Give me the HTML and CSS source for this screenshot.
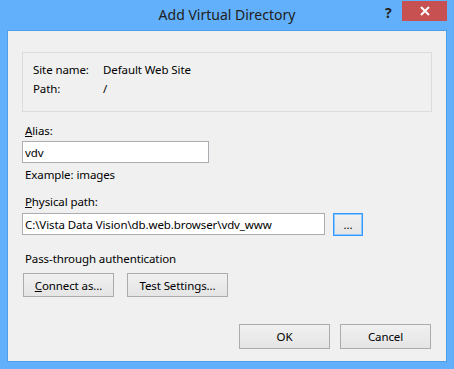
FILE: index.html
```html
<!DOCTYPE html>
<html lang="en">
<head>
    <meta charset="UTF-8">
    <title>Add Virtual Directory</title>
    <link rel="stylesheet" href="styles.css">
</head>
<body>
    <div class="window">
        <div class="titlebar">
            <span class="title">Add Virtual Directory</span>
            <span class="help">?</span>
            <span class="close">
                <svg width="10" height="10" viewBox="0 0 10 10">
                    <path d="M1 1 L9 9 M9 1 L1 9" stroke="#fff" stroke-width="2"/>
                </svg>
            </span>
        </div>
        <div class="client">
            <div class="group">
                <div class="info-row"><span class="info-label">Site name:</span><span>Default Web Site</span></div>
                <div class="info-row"><span class="info-label">Path:</span><span>/</span></div>
            </div>

            <label class="label alias-label"><u>A</u>lias:</label>
            <input class="textbox alias-box" type="text" value="vdv">
            <div class="label example">Example: images</div>

            <label class="label path-label"><u>P</u>hysical path:</label>
            <div class="path-row">
                <input class="textbox path-box" type="text" value="C:\Vista Data Vision\db.web.browser\vdv_www">
                <button class="btn browse">...</button>
            </div>

            <div class="label pass-label">Pass-through authentication</div>
            <div class="auth-row">
                <button class="btn connect"><u>C</u>onnect as...</button>
                <button class="btn test">Test Settings...</button>
            </div>

            <div class="footer">
                <button class="btn">OK</button>
                <button class="btn">Cancel</button>
            </div>
        </div>
    </div>
</body>
</html>
```

FILE: styles.css
```css
body {
    margin: 0;
    padding: 0;
    background-color: #62b0fb;
    font-family: "Noto Sans", "Open Sans", sans-serif;
    font-size: 11.5px;
    letter-spacing: -0.1px;
    color: #000;
}

.window {
    width: 454px;
    height: 369px;
    box-sizing: border-box;
    padding: 0 7px 7px 7px;
    display: flex;
    flex-direction: column;
}

.titlebar {
    height: 30px;
    position: relative;
    display: flex;
    justify-content: center;
}

.title {
    font-size: 14px;
    letter-spacing: 0;
    color: #202020;
    line-height: 30px;
}

.help {
    position: absolute;
    left: 378px;
    top: 3px;
    font-weight: bold;
    font-size: 14px;
    color: #222;
}

.close {
    position: absolute;
    left: 395px;
    top: 1px;
    width: 45px;
    height: 20px;
    background-color: #c75050;
    display: flex;
    align-items: center;
    justify-content: center;
}

.client {
    flex: 1;
    background-color: #f0f0f0;
    border: 1px solid #4d9ee9;
    padding: 0 14px;
    display: flex;
    flex-direction: column;
    align-items: flex-start;
}

.group {
    align-self: stretch;
    margin-top: 21px;
    border: 1px solid #dcdcdc;
    padding: 9px 10px 11px 10px;
    line-height: 16px;
}

.info-row {
    display: flex;
    height: 19px;
}

.info-label {
    width: 70px;
}

.label {
    line-height: 16px;
    margin-left: 3px;
}

.alias-label {
    margin-top: 11px;
}

.textbox {
    font-family: inherit;
    font-size: 11.5px;
    letter-spacing: -0.1px;
    border: 1px solid #abadb3;
    background: #fff;
    height: 22px;
    box-sizing: border-box;
    padding: 0 2px;
    margin: 0;
    color: #000;
}

.alias-box {
    width: 187px;
    margin-top: 2px;
}

.example {
    margin-top: 4px;
}

.path-label {
    margin-top: 11px;
}

.path-row {
    display: flex;
    gap: 8px;
    margin-top: 3px;
}

.path-box {
    width: 303px;
}

.btn {
    font-family: inherit;
    font-size: 11.5px;
    letter-spacing: -0.1px;
    color: #000;
    border: 1px solid #acacac;
    background: linear-gradient(#f0f0f0, #e5e5e5);
    height: 24px;
    padding: 0;
    margin: 0;
}

.browse {
    width: 30px;
    height: 23px;
    border: 1px solid #3399ff;
    box-shadow: inset 0 0 0 1px #8ec6ff;
    line-height: 12px;
}

.pass-label {
    margin-top: 15px;
}

.auth-row {
    display: flex;
    gap: 13px;
    margin-top: 6px;
    margin-left: 1px;
}

.connect {
    width: 91px;
}

.test {
    width: 101px;
}

.footer {
    align-self: flex-end;
    display: flex;
    gap: 10px;
    margin-top: 27px;
    margin-right: 1px;
}

.footer .btn {
    width: 91px;
    height: 25px;
}
```
